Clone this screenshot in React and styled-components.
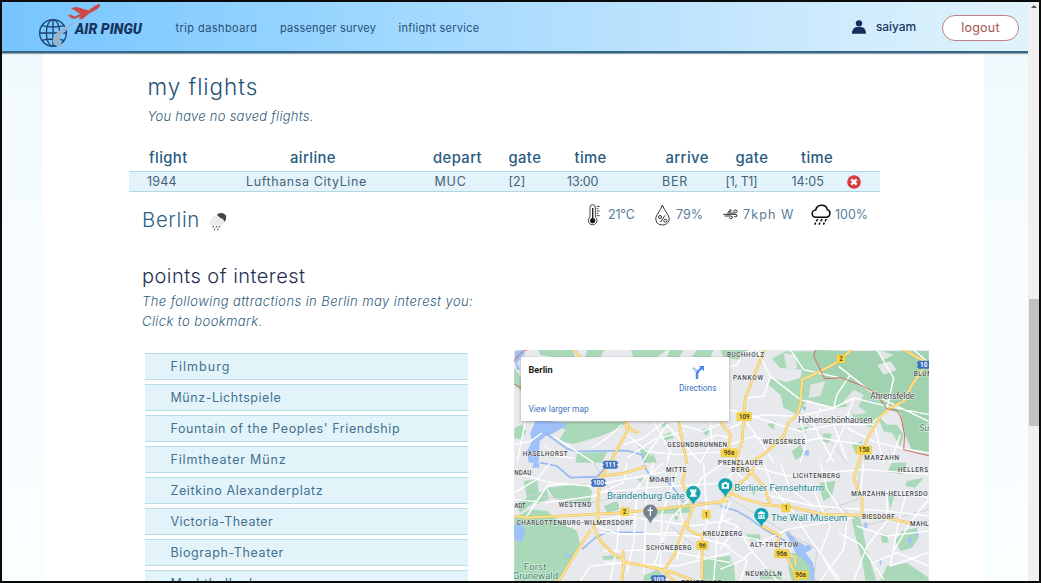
import React from "react";
import styled, { createGlobalStyle } from "styled-components";

const Global = createGlobalStyle`
  * { box-sizing: border-box; }
  html, body { margin: 0; padding: 0; overflow: hidden; }
  body { font-family: Inter, "Liberation Sans", sans-serif; color: #2f5d7e; }
`;

const Frame = styled.div`
  width: 1041px;
  height: 583px;
  border: 2px solid #0b0b0b;
  display: flex;
  overflow: hidden;
  background: #fff;
`;
const Page = styled.div`
  width: 1026px;
  height: 579px;
  display: flex;
  flex-direction: column;
  overflow: hidden;
`;
const Scrollbar = styled.div`
  width: 11px;
  height: 579px;
  background: #f0f0f0;
  display: flex;
  flex-direction: column;
  align-items: center;
  padding-top: 3px;
`;
const Arrow = styled.div`
  width: 0;
  height: 0;
  border: 3px solid transparent;
  border-top: 0;
  border-bottom: 3px solid #505050;
`;
const Thumb = styled.div`
  width: 10px;
  height: 127px;
  margin-top: 291px;
  background: #c1c1c1;
`;

const Header = styled.header`
  height: 51px;
  flex: none;
  display: flex;
  align-items: center;
  padding: 0 9px 0 36px;
  border-bottom: 2px solid #346688;
  box-shadow: 0 1px 1px #9aa5ad;
  position: relative;
  background: linear-gradient(90deg, #77c5ff 0%, #96d4ff 30%, #b8e1fd 60%, #cdeafd 80%, #e0f3fb 100%);
`;
const Logo = styled.div`
  display: flex;
  width: 137.5px;
  height: 49px;
`;
const Brand = styled.span`
  font: italic 900 14.1px/54px Roboto, sans-serif;
  color: #16335c;
  margin-left: -27px;
  white-space: nowrap;
`;
const Nav = styled.nav`
  display: flex;
  gap: 22.5px;
`;
const NavLink = styled.a`
  font-size: 11px;
  line-height: 16px;
  width: ${(p) => p.$w}px;
  letter-spacing: ${(p) => p.$ls}px;
  white-space: nowrap;
  color: #285078;
  padding-top: 3px;
`;
const User = styled.div`
  margin-left: auto;
  display: flex;
  align-items: center;
  gap: 10px;
  margin-right: 26px;
  font-size: 12px;
  font-weight: 500;
  letter-spacing: -0.1px;
  color: #1c3760;
`;
const Logout = styled.button`
  width: 77px;
  height: 26px;
  border: 1px solid #bf8087;
  border-radius: 13px;
  background: #fff;
  color: #a65553;
  font: 400 12.5px Inter, sans-serif;
  letter-spacing: 0.2px;
  padding: 0;
  margin-top: 2px;
`;

const Body = styled.div`
  flex: 1;
  padding: 0 44.5px 0 41px;
  background: linear-gradient(180deg, #f0f9fd 0, #f7fdff 200px, #f9feff 100%);
`;
const Main = styled.main`
  height: 528px;
  background: #fff;
  padding: 20px 55px 0 86px;
  display: flex;
  flex-direction: column;
  > * { flex-shrink: 0; }
`;
const Title = styled.h1`
  margin: 0 0 0 18.5px;
  font-size: 22.5px;
  font-weight: 300;
  line-height: 28px;
  letter-spacing: 0.95px;
  color: #1f5177;
`;
const Note = styled.p`
  margin: ${(p) => p.$m};
  font-size: 13px;
  font-style: italic;
  font-weight: 300;
  line-height: 19.5px;
  letter-spacing: ${(p) => p.$ls}px;
  color: #2f5d7e;
  white-space: nowrap;
`;
const HeadRow = styled.div`
  margin-top: 21px;
  padding-left: 20px;
  height: 23.5px;
  display: grid;
  grid-template-columns: 141px 143px 75.5px 66px 91px 70px 65.5px 60px;
  font-size: 14.8px;
  font-weight: 500;
  line-height: 20px;
  letter-spacing: 0.4px;
  color: #285b80;
`;
const FlightRow = styled.div`
  width: 751px;
  height: 21px;
  padding-left: 18px;
  background: #e2f4fa;
  border: solid #b3d6e3;
  border-width: 1px 0;
  display: grid;
  align-items: center;
  grid-template-columns: 99px 188.5px 74px 58.5px 95px 63.5px 66px 55px 16px;
  font-size: 12.5px;
  color: #48617b;
`;
const Cell = styled.span`
  letter-spacing: ${(p) => p.$ls || 0}px;
  white-space: nowrap;
`;
const WeatherRow = styled.div`
  display: flex;
  height: 52px;
  padding-left: 13px;
`;
const City = styled.h2`
  margin: 12px 0 0;
  width: 66px;
  font-size: 20.4px;
  line-height: 32px;
  font-weight: 300;
  letter-spacing: 0.65px;
  color: #2d5f83;
`;
const CloudBox = styled.div`
  padding-top: 20px;
`;
const Stats = styled.div`
  margin-left: 360px;
  padding-top: 10px;
  display: flex;
  height: 35px;
`;
const Stat = styled.div`
  width: ${(p) => p.$w}px;
  display: flex;
  align-items: center;
  gap: ${(p) => p.$gap}px;
  font-size: 12.5px;
  letter-spacing: ${(p) => p.$ls}px;
  color: #587c99;
  white-space: nowrap;
  svg { flex: none; }
`;
const Section = styled.h2`
  margin: 18px 0 0 13px;
  font-size: 20px;
  line-height: 28px;
  font-weight: 300;
  letter-spacing: 0.47px;
  color: #262f55;
`;
const Columns = styled.div`
  margin: 19px 0 0 15.5px;
  display: flex;
  justify-content: space-between;
  align-items: flex-start;
`;
const List = styled.div`
  width: 323px;
  margin-top: 2.5px;
  display: flex;
  flex-direction: column;
  gap: 4px;
`;
const Item = styled.div`
  height: 27px;
  padding-left: 26px;
  background: #e2f4fa;
  border: solid #b9dce8;
  border-width: 1px 0;
  font-size: 12.5px;
  line-height: 26px;
  letter-spacing: ${(p) => p.$ls}px;
  color: #44708f;
  white-space: nowrap;
`;
const MapBox = styled.div`
  width: 415px;
  height: 231px;
  position: relative;
  overflow: hidden;
  svg { display: block; }
`;
const MapCard = styled.div`
  position: absolute;
  left: 7px;
  top: 7px;
  width: 208px;
  height: 64px;
  padding: 7px 12px 6px 8px;
  background: #fff;
  box-shadow: 0 1px 3px rgba(0, 0, 0, 0.3);
  display: flex;
  justify-content: space-between;
  font: 400 8.4px/12px Roboto, sans-serif;
  color: #3a72c0;
`;
const CardLeft = styled.div`
  display: flex;
  flex-direction: column;
  justify-content: space-between;
`;
const Place = styled.strong`
  font-weight: 700;
  font-size: 9.2px;
  color: #1b1b1b;
`;
const Directions = styled.div`
  display: flex;
  flex-direction: column;
  align-items: center;
  gap: 2px;
  padding-top: 1px;
`;

const LogoArt = () => (
  <svg width="64" height="50" viewBox="0 0 192 150">
    <g fill="none" stroke="#1b4370" strokeWidth="4">
      <circle cx="45" cy="93" r="40" />
      <ellipse cx="45" cy="93" rx="20" ry="40" />
      <path d="M45 53V133M5 93H85M12 71Q45 79 78 71M12 115Q45 107 78 115" />
    </g>
    <path d="M132 50Q62 78 48 106Q36 134 84 136Q58 124 66 104Q78 82 132 50Z" fill="#9fb0c0" stroke="#86c9fc" strokeWidth="3" />
    <path d="M91 40L99 39L109 45L129 36L101 19L115 16L151 26L173 11Q184 5 186 9Q186 15 176 21L153 34L133 50L124 51L130 41L108 50Q101 50 91 40Z" fill="#cd4648" stroke="#cd4648" strokeWidth="2" />
  </svg>
);

const Person = () => (
  <svg width="14" height="14" viewBox="0 0 42 42" fill="#142d5c">
    <circle cx="21" cy="10" r="9.5" />
    <path d="M0 41Q1 21 15 21H27Q41 21 42 41Z" />
  </svg>
);

const Remove = () => (
  <svg width="14" height="14" viewBox="0 0 42 42">
    <circle cx="21" cy="21" r="20.5" fill="#d83b40" />
    <path d="M13 13L29 29M29 13L13 29" stroke="#fff" strokeWidth="7" />
  </svg>
);

const NightRain = () => (
  <svg width="19" height="20" viewBox="0 0 57 60">
    <path d="M28 6Q45-2 53 10Q58 22 49 29Q42 34 30 24Z" fill="#444" />
    <path d="M10 40A10 10 0 0 1 10 22A15 15 0 0 1 37 18A13 12 0 0 1 40 41Z" fill="#ececec" />
    <path d="M17 42l-3 5M27 42l-3 5M36 42l-3 5M21 50l-3 5M31 50l-3 5" stroke="#444" strokeWidth="3" />
  </svg>
);

const Thermometer = () => (
  <svg width="14" height="22" viewBox="0 0 42 66" fill="none" stroke="#222" strokeWidth="2.5">
    <path d="M9 39V10a8 8 0 0 1 16 0V39a13 13 0 1 1-16 0Z" />
    <circle cx="17" cy="50" r="7" fill="#111" />
    <path d="M17 12V48" strokeWidth="4" />
    <path d="M29 7H38M29 14H34M29 21H38M29 28H34M29 35H38" />
  </svg>
);

const Drop = () => (
  <svg width="15" height="22" viewBox="0 0 45 66" fill="none" stroke="#333" strokeWidth="3">
    <path d="M22 3Q27 16 38 31Q45 41 42 49Q37 63 22 63Q7 63 3 49Q0 41 7 31Q18 16 22 3Z" />
    <path d="M30 34L16 55" />
    <circle cx="15" cy="39" r="4.5" />
    <circle cx="31" cy="50" r="4.5" />
  </svg>
);

const Wind = () => (
  <svg width="15" height="11" viewBox="0 0 45 33" fill="none" stroke="#2c2c2c" strokeWidth="3" strokeLinecap="round">
    <path d="M14 12H34Q43 12 43 7Q41 1 35 3Q31 5 33 8" />
    <path d="M16 8H20Q27 7 24 3Q21 1 19 4" />
    <path d="M2 16H36Q43 16 42 21Q39 26 34 23" />
    <path d="M6 21H23Q30 22 28 27Q24 31 19 27" />
  </svg>
);

const Rain = () => (
  <svg width="21" height="22" viewBox="0 0 63 66" fill="none" stroke="#080808" strokeWidth="4.5">
    <path d="M15 40H47A12 12 0 0 0 49 17Q46 3 30 4Q17 5 14 18A11 11 0 0 0 15 40Z" />
    <path d="M20 45l-4 7M33 45l-4 7M46 45l-4 7M14 56l-3 6M27 56l-3 6M40 56l-3 6" />
  </svg>
);

const Turn = () => (
  <svg width="14" height="15" viewBox="0 0 42 45" fill="none">
    <path d="M5 9Q18 15 18 27V42" stroke="#a3c4fb" strokeWidth="7" />
    <path d="M18 42V29Q18 19 32 10" stroke="#4c86f0" strokeWidth="7" />
    <path d="M23 3H39V19Z" fill="#4c86f0" />
  </svg>
);

const TILES = { a: [0, 0], b: [630, 0], c: [0, 354], d: [630, 354] };
const Tile = ({ at, children }) => (
  <g transform={`translate(${TILES[at][0]} ${TILES[at][1]})`}>{children}</g>
);

const GREENS = {
  a: "M75 0H180L195 38H130L90 30ZM12 70L32 100V140L12 120ZM110 232H350L330 250L270 275L190 298L145 288L165 255ZM12 250L35 240L48 262L30 285L12 280ZM200 325L290 322L275 354H195ZM385 305L410 312L420 335L398 345ZM395 340L430 330L440 354H395ZM455 275L480 262L490 280L460 290ZM450 240L470 232L465 252ZM570 255L600 250L590 275ZM235 0H290L270 38H225ZM360 10L470 15L440 38H370ZM560 15H610L600 38H545ZM480 12L520 18L505 38H470Z",
  b: "M0 12L90 15L60 45L10 40ZM150 100L200 112L240 100L245 75L180 70L155 42L195 20H625V330L575 318L555 260L540 205L500 195L450 250L400 220L385 185L345 190L260 165L235 210L190 190L180 150L145 120ZM195 125L230 110L240 145L200 150ZM310 265L335 268L325 295L303 290ZM215 320L240 300L255 330L225 345ZM140 240L165 228L160 255ZM395 300L425 290L430 320L405 325ZM470 210L500 240L530 240L550 270L540 305L515 265L490 260ZM230 250L265 245L255 268Z",
  c: "M12 165L60 140L110 145L150 180L200 205L210 250L150 354H12ZM110 75L225 63L245 85L240 120L180 125L130 105ZM40 55L80 50L85 85L70 120L30 150L15 125L50 105ZM70 95L110 80L115 110L80 125ZM410 143L540 122V150L430 155ZM580 290L660 280V354H575ZM280 130L320 115L330 140L290 150ZM380 50L402 45L396 65ZM490 150L505 165L495 175ZM400 340L440 320L470 345L400 354ZM275 280L330 278L325 288L280 292Z",
  d: "M300 60L345 55L335 100L310 115L300 85ZM515 0H560L545 35L500 28ZM560 55L610 45L585 75L555 70ZM500 90L525 88L510 140ZM390 155L420 165L440 265L468 354H435L425 290L405 220ZM545 205L590 195L595 225L575 255L540 265L525 235ZM480 210L500 215L505 240L485 240ZM205 270L260 275L285 320L280 354H215L205 325ZM0 290L40 300L45 354H0ZM120 325L150 320L190 350H120ZM500 310L560 300L625 345V354H480ZM75 215L120 215L120 235L90 232ZM85 65L110 80L100 100Z",
};
const WATERS = {
  a: "M15 20L35 15L45 25L20 55L30 75L20 75L12 45ZM55 354L50 320L65 290L60 265L75 230H120L170 236L165 245L125 268L105 275L88 290L85 354Z",
  b: "M248 185L258 187L256 198L249 197ZM252 318L266 315L265 335L255 332ZM450 165L461 170L458 180Z",
  c: "M12 190L25 170L45 205L35 240L12 230ZM70 0H85L88 15H65ZM155 270L190 280L185 290Z",
  d: "M195 210L205 205L225 230L255 250L270 245L275 260L255 270L278 300L285 354H272L268 310L245 285L225 270L215 245ZM430 180L442 180L440 203L430 195ZM560 230L575 222L570 250ZM583 205L596 210L590 225ZM475 290L485 290L480 310Z",
};
const RIVERS = {
  a: "M105 265L170 312L200 320L350 318L395 330L405 354",
  c: "M90 0L140 10L180 45L260 42L285 15M400 8L420 40L475 60L500 90L520 120M215 260L255 225L290 208L400 210",
  d: "M0 130L50 145L85 165L125 195L195 235",
};
const LOCALS = {
  a: "M12 300L60 290L95 265M20 354L45 230M100 300L140 335L190 340M130 275L250 354M245 310L290 280L335 240M340 300L400 280L460 232M350 270L410 320L500 330L660 320M395 354L470 240L570 354M430 232L480 320L470 354M490 235L580 260L640 232M550 300L620 270L660 280M570 354L605 290L600 232M350 340L430 285L520 260",
  b: "M0 75L50 60L70 25L100 15M110 15L150 95L130 155L75 160M150 95L240 165L340 190L400 160L480 180L625 210M75 225L130 210L235 215L340 190L350 150L390 90M355 65L470 155L625 230M0 190L70 205L160 235L240 260L340 240L460 240M80 235L120 290L160 354M30 250L70 230M235 215L260 290L240 354M300 190L280 240L340 354M340 240L380 350M380 250L460 290L540 310L625 325M400 160L370 250L320 354M500 200L460 230L490 354M540 270L510 354M210 15L250 75L360 100M470 15L520 100L500 190M580 15L625 55M0 310L100 275L200 300L300 280L425 300",
  c: "M12 30L120 60L240 70L500 20M12 90L80 50L120 0M12 110L110 120L250 100L340 60L350 0M50 160L110 70L170 60M270 90L410 75L660 60M170 190L340 160L550 190L660 170M200 170L330 215L500 210M270 210L550 220L660 250M300 354L320 250L330 130M350 330L370 240L380 90M400 330L410 60L430 0M450 320L455 150L500 30M500 290L520 200L500 90M560 290L590 180L580 0M610 354L620 220L650 90M280 265L450 260L660 300M285 300L500 310L660 270M210 354L240 310L350 300M460 0L400 50L350 120M640 0L570 50L550 95L480 170L430 310",
  d: "M0 65L45 25L110 15L200 40L430 20L625 35M20 0L80 60L150 100L280 130L500 145L625 160M130 0L160 80L220 150L270 230L360 354M180 0L210 80L280 130M270 60L300 130L330 190L300 270L350 354M300 0L320 80L380 170L370 260L300 354M430 0L420 100L500 90L625 105M500 80L500 175L440 250L400 354M560 80L530 200L510 310L625 270M625 110L570 180L520 265M0 210L110 230L200 275M15 250L80 295L60 354M50 190L90 260L170 354M0 320L70 290L120 240L200 200L310 180L400 165M0 170L50 190L0 260M30 120L0 180M410 190L500 220L625 205M460 300L530 270L625 310M355 210L420 245L490 350",
};
const RAILS = {
  b: "M250 230L330 290L380 354",
  c: "M250 0L300 85L660 130M50 95L240 120L350 100M480 190L640 320",
  d: "M0 90L100 150L180 200L290 260L280 354M200 155L280 155L410 110L420 0M350 125L430 190L625 140",
};
const MAINS = {
  a: "M180 0L208 38M345 232L352 257L325 305L300 354M345 235L370 260L382 262M505 232L516 290L530 354",
  b: "M140 0L110 70L75 160L70 220L65 290L45 354M0 232L30 270L25 310M410 0L355 50L300 80L245 105L240 180L230 210L205 232L190 275L135 325L90 354M545 12L620 55M610 70L575 120L550 170L510 190L480 215L440 285L415 354",
  c: "M300 0L270 45L262 120L265 165L250 195L270 235L300 265L350 300L430 315L490 330L550 354M270 40L340 32L405 12M12 160L50 165L150 160L340 150L530 130L650 115M238 205L145 354M338 265L340 300L335 354M525 25L515 60L550 130L530 180L535 200L560 215H600M525 180L495 270L460 325L490 354M575 354V220",
  d: "M15 100L40 95L60 105L130 125L220 135L310 155L430 158M100 15L80 45L30 85L0 120M45 0L60 20L85 20L130 70L150 125M415 0L400 45L415 85L425 105V158M430 160L500 165L570 182M125 190L180 220L165 250L200 285L235 354M205 275L225 285L225 305",
};

const Layer = ({ data, ...rest }) => (
  <g {...rest}>
    {Object.entries(data).map(([k, d]) => (
      <Tile key={k} at={k}><path d={d} /></Tile>
    ))}
  </g>
);

const LABELS = [
  ["a", 37, 334, 135, "HASELHORST"],
  ["a", 471, 307, 179, "GESUNDBRUNNEN"],
  ["b", 20, 38, 111, "BUCHHOLZ"],
  ["b", 38, 105, 90, "PANKOW"],
  ["b", 127, 299, 128, "WEISSENSEE"],
  ["b", 432, 345, 104, "MARZAHN"],
  ["b", 580, 95, 84, "BLUMBE"],
  ["c", 12, 37, 51, "NDAU"],
  ["c", 12, 136, 34, "ADT"],
  ["c", 467, 27, 61, "MITTE"],
  ["c", 417, 59, 78, "MOABIT"],
  ["c", 145, 132, 98, "WESTEND"],
  ["c", 19, 186, 350, "CHARLOTTENBURG-WILMERSDORF"],
  ["c", 407, 262, 137, "SCHÖNEBERG"],
  ["c", 577, 221, 119, "KREUZBERG"],
  ["c", 513, 366, 120, "TEMPELHOF"],
  ["d", -7, 8, 134, "PRENZLAUER"],
  ["d", 33, 27, 55, "BERG"],
  ["d", 217, 46, 142, "LICHTENBERG"],
  ["d", 533, 29, 90, "HELLERS"],
  ["d", 393, 99, 229, "MARZAHN-HELLERSDO"],
  ["d", 425, 169, 98, "BIESDORF"],
  ["d", 569, 189, 56, "MAHL"],
  ["d", 89, 253, 145, "ALT-TREPTOW"],
  ["d", 75, 340, 109, "NEUKÖLLN"],
];
const BADGES = [
  ["b", 362, 42, 26, "2"], ["b", 72, 215, 45, "109"], ["b", 431, 316, 45, "158"], ["b", 26, 324, 48, "96a"],
  ["c", 343, 147, 26, "2"], ["c", 588, 155, 24, "1"], ["c", 576, 248, 34, "96"],
  ["d", 197, 135, 25, "1"], ["d", 184, 273, 43, "96a"], ["d", 241, 336, 43, "96a"],
];
const SHIELDS = [
  ["b", 610, 60, 42, "10"], ["a", 300, 360, 48, "111"], ["c", 264, 60, 46, "100"], ["c", 444, 350, 48, "103"],
];

const Pin = ({ at, x, y, color, children }) => (
  <Tile at={at}>
    <g transform={`translate(${x} ${y})`}>
      <path d="M0 37L-4 29Q-6 24-14 17A22 22 0 1 1 14 17Q6 24 4 29Z" fill={color} stroke="#fff" strokeWidth="1" />
      {children}
    </g>
  </Tile>
);

const BerlinMap = () => (
  <svg width="415" height="231" viewBox="11 16 1245 693" fontFamily="Roboto, sans-serif">
    <rect width="1270" height="720" fill="#e8e9ed" />
    <Layer data={GREENS} fill="#a9d9b9" />
    <Tile at="b">
      <path d="M395 20H625V320L575 315L550 265L540 205L500 190L430 125L360 100L313 102L280 30L285 15Z" fill="#9dcfae" opacity=".75" />
      <path d="M470 60L510 50L530 75L490 90ZM370 170L400 135L430 150L415 185L440 205L400 210ZM470 15L520 30L490 45ZM270 120L315 110L300 155L265 160ZM190 25L225 30L230 70L200 80Z" fill="#e2e6e7" />
    </Tile>
    <Layer data={WATERS} fill="#9dc1f8" />
    <Layer data={RIVERS} fill="none" stroke="#96baf3" strokeWidth="5" />
    <Layer data={RAILS} fill="none" stroke="#ced2d8" strokeWidth="3" />
    <Layer data={LOCALS} fill="none" stroke="#fff" strokeWidth="4.2" strokeLinejoin="round" />
    <Layer data={MAINS} fill="none" stroke="#edbd4c" strokeWidth="8" strokeLinejoin="round" strokeLinecap="round" />
    <Layer data={MAINS} fill="none" stroke="#fde397" strokeWidth="5" strokeLinejoin="round" strokeLinecap="round" />
    <Tile at="b">
      <path d="M285 15L280 35L313 102L362 99L430 125L465 145L500 192L530 198L542 220L553 270L550 315L628 334" fill="none" stroke="#d56a62" strokeWidth="3" />
    </Tile>
    <path d="M12 50Q28 20 50 16M12 118L32 130" fill="none" stroke="#d56a62" strokeWidth="3" />
    <g fontSize="19" fill="#41454b" stroke="#fff" strokeWidth="2" paintOrder="stroke" fontWeight="500">
      {LABELS.map(([t, x, y, w, s]) => (
        <Tile key={s} at={t}><text x={x} y={y} textLength={w}>{s}</text></Tile>
      ))}
    </g>
    {BADGES.map(([t, x, y, w, s], i) => (
      <Tile key={i} at={t}>
        <rect x={x - w / 2} y={y - 12} width={w} height="25" rx="3" fill="#f8d648" stroke="#dfb52e" />
        <text x={x} y={y + 7} fontSize="19" fontWeight="500" textAnchor="middle" fill="#3b3621">{s}</text>
      </Tile>
    ))}
    {SHIELDS.map(([t, x, y, w, s], i) => (
      <Tile key={i} at={t}>
        <path d={`M${x - w / 2 + 6} ${y - 12}H${x + w / 2 - 6}L${x + w / 2} ${y - 5}L${x + w / 2 - 5} ${y}L${x + w / 2} ${y + 6}L${x + w / 2 - 6} ${y + 12}H${x - w / 2 + 6}L${x - w / 2} ${y + 6}L${x - w / 2 + 5} ${y}L${x - w / 2} ${y - 5}Z`} fill="#3d6fbe" />
        <text x={x} y={y + 7} fontSize="19" fontWeight="700" textAnchor="middle" fill="#fff">{s}</text>
      </Tile>
    ))}
    <g stroke="#fff" strokeWidth="2.5" paintOrder="stroke" fontSize="25.5" fill="#33373c">
      <Tile at="b">
        <text x="450" y="163" textLength="132">Ahrensfelde</text>
        <text x="234" y="234" textLength="222">Hohenschönhausen</text>
        <text x="595" y="258" fontSize="29" fontStyle="italic" fill="#3d8760">Sü</text>
      </Tile>
      <Tile at="c">
        <text x="40" y="322" fontSize="28.5" fill="#2f7d55" textLength="68">Forst</text>
        <text x="7" y="350" fontSize="28.5" fill="#2f7d55" textLength="136">Grunewald</text>
        <text x="290" y="109" fontSize="29" fill="#0f7f8c" textLength="233">Brandenburg Gate</text>
      </Tile>
      <Tile at="d">
        <text x="42" y="85" fontSize="29" fill="#0f7f8c" textLength="269">Berliner Fernsehturm</text>
        <text x="152" y="175" fontSize="29" fill="#0f7f8c" textLength="229">The Wall Museum</text>
      </Tile>
    </g>
    <Pin at="c" x={549} y={91} color="#12a4b0">
      <path d="M-9-12H-5V-8H-2V-12H2V-8H5V-12H9V-3H6L7 7H10V11H-10V7H-7L-6-3H-9Z" fill="#fff" />
    </Pin>
    <Pin at="c" x={420} y={147} color="#72828f">
      <path d="M-2-13H2V-6H8V-2H2V13H-2V-2H-8V-6H-2Z" fill="#fff" />
    </Pin>
    <Pin at="d" x={15} y={68} color="#12a4b0">
      <path d="M-11-7H-5L-3-11H4L6-7H11V10H-11Z" fill="#fff" />
      <circle r="5" cy="1" fill="#12a4b0" />
    </Pin>
    <Pin at="d" x={123} y={157} color="#12a4b0">
      <path d="M0-12L11-6V-3H-11V-6ZM-9-1H9V8H11V11H-11V8H-9Z" fill="#fff" />
      <path d="M-4 1V8M4 1V8" stroke="#12a4b0" strokeWidth="3" />
    </Pin>
  </svg>
);

const HEADS = ["flight", "airline", "depart", "gate", "time", "arrive", "gate", "time"];
const CELLS = [
  ["1944", 0.2], ["Lufthansa CityLine", 0.6], ["MUC", 0.8], ["[2]", 0], ["13:00", -0.2], ["BER", 0.8], ["[1, T1]", -0.4], ["14:05", 0],
];
const POIS = [
  ["Filmburg", 1.05], ["Münz-Lichtspiele", 0.54], ["Fountain of the Peoples' Friendship", 0.6],
  ["Filmtheater Münz", 0.82], ["Zeitkino Alexanderplatz", 0.6], ["Victoria-Theater", 0.42],
  ["Biograph-Theater", 0.6], ["Markthallenbrunnen", 0.83],
];

export default function App() {
  return (
    <>
      <Global />
      <Frame>
        <Page>
          <Header>
            <Logo><LogoArt /><Brand>AIR PINGU</Brand></Logo>
            <Nav>
              <NavLink $w={82} $ls={0.42}>trip dashboard</NavLink>
              <NavLink $w={96} $ls={0.2}>passenger survey</NavLink>
              <NavLink $w={82} $ls={0.27}>inflight service</NavLink>
            </Nav>
            <User><Person />saiyam</User>
            <Logout>logout</Logout>
          </Header>
          <Body>
            <Main>
              <Title>my flights</Title>
              <Note $m="6px 0 0 18.5px" $ls={0.26}>You have no saved flights.</Note>
              <HeadRow>{HEADS.map((h, i) => <span key={i}>{h}</span>)}</HeadRow>
              <FlightRow>
                {CELLS.map(([c, ls]) => <Cell key={c} $ls={ls}>{c}</Cell>)}
                <Remove />
              </FlightRow>
              <WeatherRow>
                <City>Berlin</City>
                <CloudBox><NightRain /></CloudBox>
                <Stats>
                  <Stat $w={68} $gap={7} $ls={-0.2}><Thermometer />21°C</Stat>
                  <Stat $w={68} $gap={6} $ls={0}><Drop />79%</Stat>
                  <Stat $w={88} $gap={5} $ls={1.1}><Wind />7kph W</Stat>
                  <Stat $w={61} $gap={3} $ls={0}><Rain />100%</Stat>
                </Stats>
              </WeatherRow>
              <Section>points of interest</Section>
              <Note $m="2px 0 0 13px" $ls={0.42}>
                The following attractions in Berlin may interest you:<br />Click to bookmark.
              </Note>
              <Columns>
                <List>{POIS.map(([s, ls]) => <Item key={s} $ls={ls}>{s}</Item>)}</List>
                <MapBox>
                  <BerlinMap />
                  <MapCard>
                    <CardLeft><Place>Berlin</Place><span>View larger map</span></CardLeft>
                    <Directions><Turn />Directions</Directions>
                  </MapCard>
                </MapBox>
              </Columns>
            </Main>
          </Body>
        </Page>
        <Scrollbar><Arrow /><Thumb /></Scrollbar>
      </Frame>
    </>
  );
}
